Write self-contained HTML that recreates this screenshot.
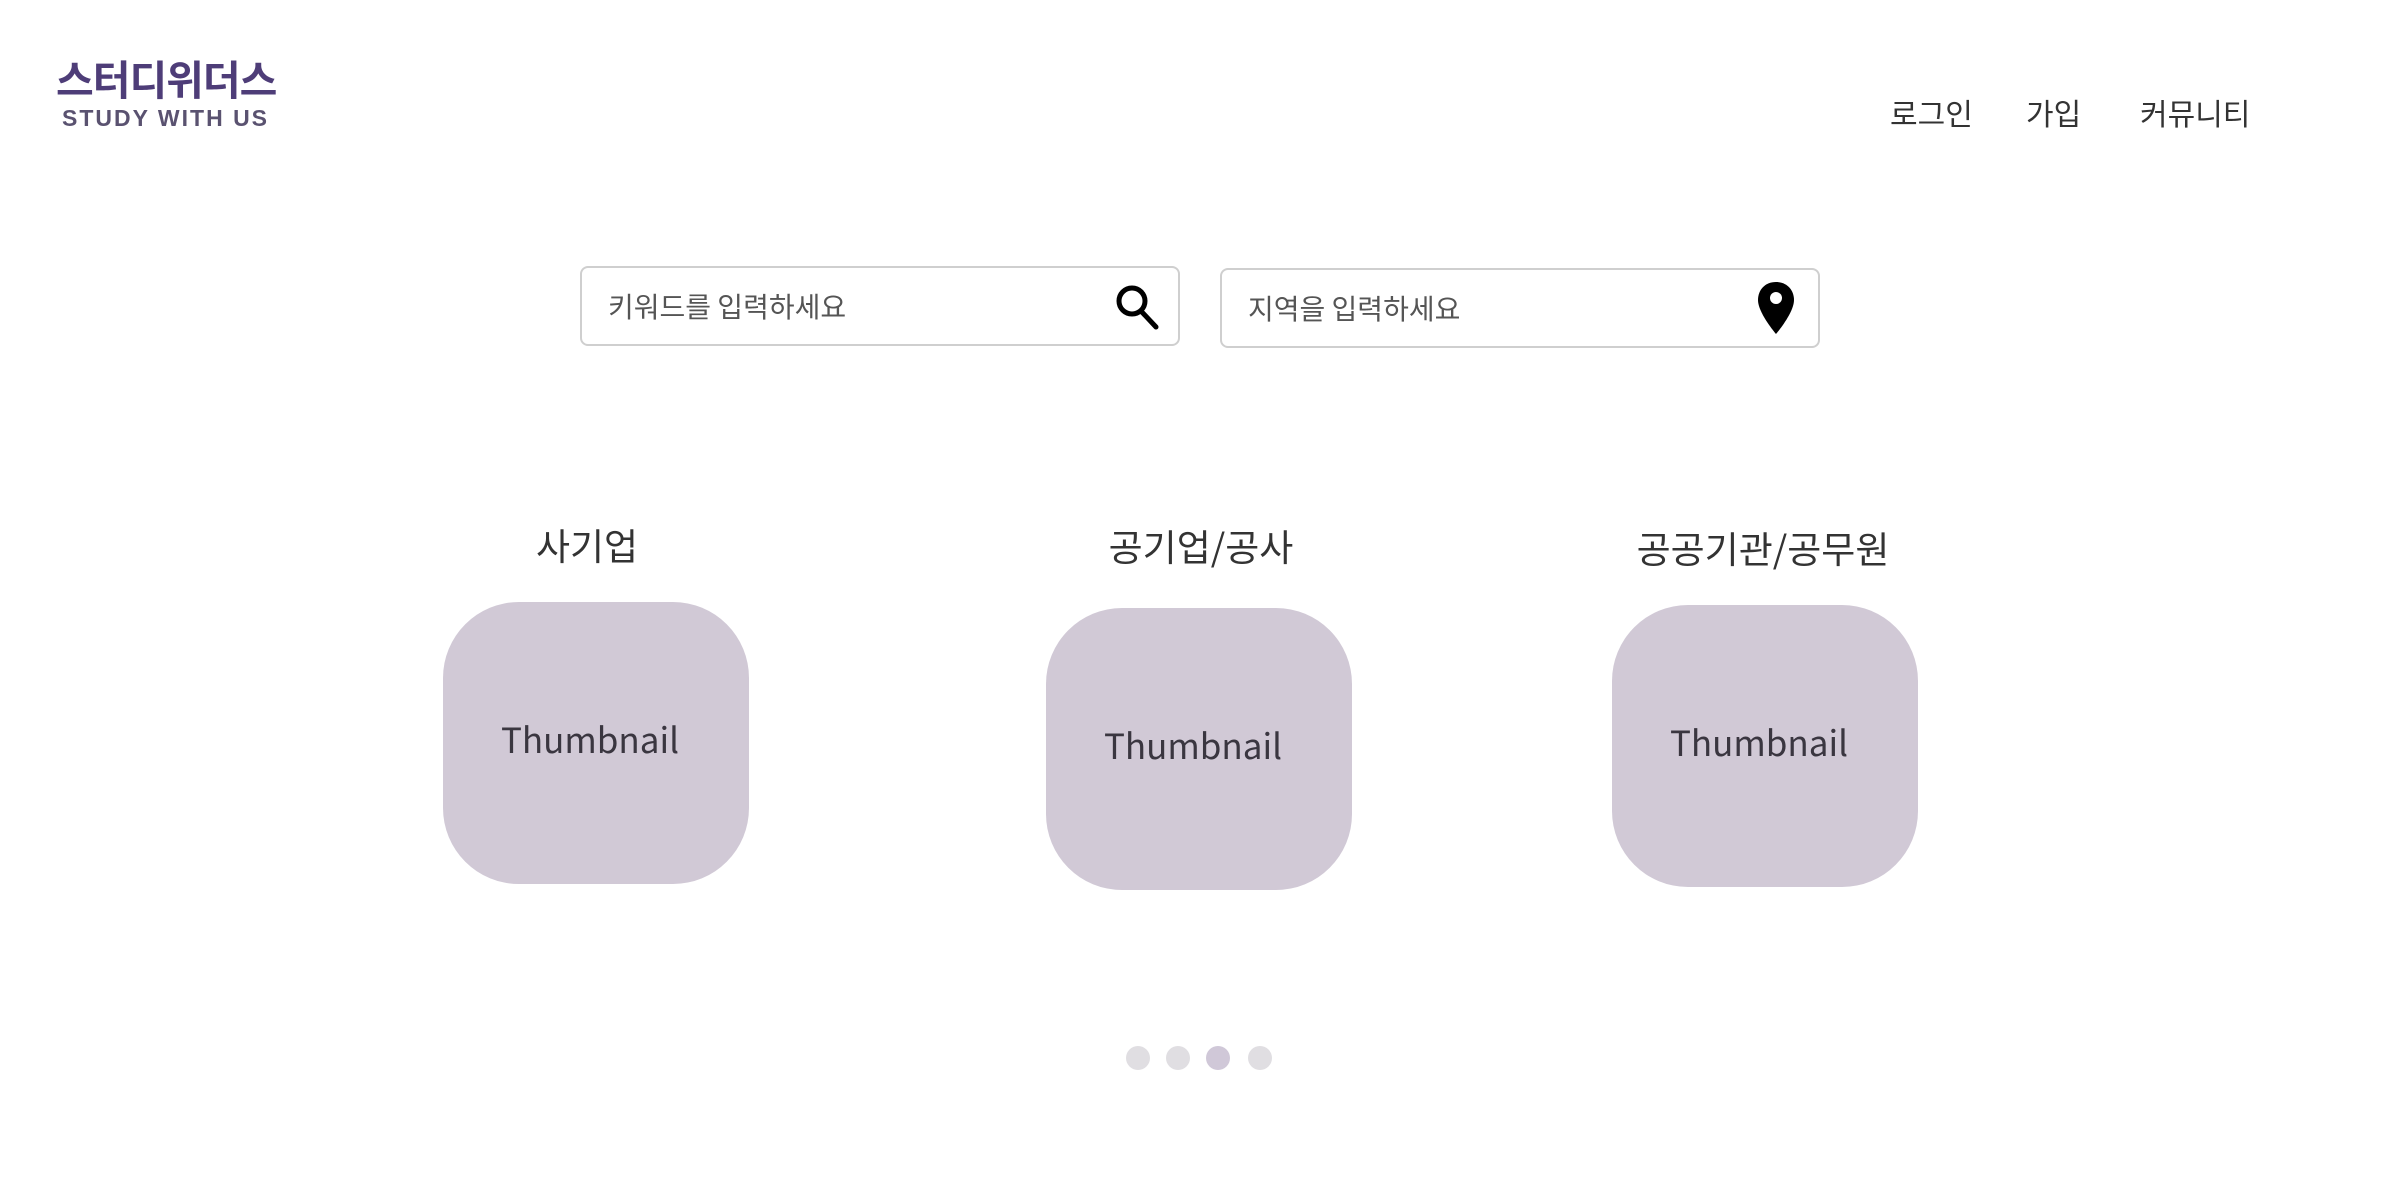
<!DOCTYPE html>
<html><head><meta charset="utf-8"><style>
*{margin:0;padding:0;box-sizing:border-box}
body{width:2400px;height:1200px;background:#fff;position:relative;overflow:hidden;font-family:"Liberation Sans","Noto Sans CJK KR",sans-serif;color:#333}
.abs{position:absolute}
.logo1{left:56px;top:52px;font-size:41px;font-weight:700;color:#4e3d78;letter-spacing:-1px;font-family:"Noto Sans CJK KR",sans-serif;line-height:50px}
.logo2{left:62px;top:104px;font-size:23px;font-weight:700;color:#5a5270;letter-spacing:2px;line-height:28px}
.nav{top:90px;font-size:30px;line-height:44px;color:#333;font-family:"Noto Sans CJK KR",sans-serif}
.box{height:80px;border:2px solid #cfcfcf;border-radius:8px;background:#fff}
.ph{position:absolute;left:26px;top:20px;font-size:28px;line-height:36px;color:#555;font-family:"Noto Sans CJK KR",sans-serif}
.h{font-size:37px;line-height:50px;color:#333;text-align:center;width:400px;font-family:"Noto Sans CJK KR",sans-serif}
.th{width:306px;height:282px;border-radius:76px;background:#d1c9d6;display:flex;align-items:center;justify-content:center;font-size:35px;color:#3a3640;font-family:"Noto Sans CJK KR",sans-serif;padding-bottom:10px;padding-right:12px}
.dot{width:24px;height:24px;border-radius:50%;background:#e0dee2;top:1046px}
</style></head><body>
<div class="abs logo1">스터디위더스</div>
<div class="abs logo2">STUDY WITH US</div>
<div class="abs nav" style="left:1890px">로그인</div>
<div class="abs nav" style="left:2026px">가입</div>
<div class="abs nav" style="left:2140px">커뮤니티</div>

<div class="abs box" style="left:580px;top:266px;width:600px">
<div class="ph">키워드를 입력하세요</div>
<svg class="abs" style="left:532px;top:15px" width="48" height="50" viewBox="0 0 48 50"><circle cx="18" cy="18" r="13" fill="none" stroke="#000" stroke-width="5"/><line x1="27" y1="28" x2="42" y2="44" stroke="#000" stroke-width="5" stroke-linecap="round"/></svg>
</div>
<div class="abs box" style="left:1220px;top:268px;width:600px">
<div class="ph">지역을 입력하세요</div>
<svg class="abs" style="left:534px;top:10px" width="40" height="56" viewBox="0 0 40 56"><path d="M20 2C9 2 2 10 2 20c0 13 18 34 18 34s18-21 18-34C38 10 31 2 20 2z" fill="#000"/><circle cx="20" cy="18" r="6" fill="#fff"/></svg>
</div>

<div class="abs h" style="left:387px;top:519px">사기업</div>
<div class="abs h" style="left:1001px;top:520px">공기업/공사</div>
<div class="abs h" style="left:1563px;top:522px">공공기관/공무원</div>

<div class="abs th" style="left:443px;top:602px">Thumbnail</div>
<div class="abs th" style="left:1046px;top:608px">Thumbnail</div>
<div class="abs th" style="left:1612px;top:605px">Thumbnail</div>

<div class="abs dot" style="left:1126px"></div>
<div class="abs dot" style="left:1166px"></div>
<div class="abs dot" style="left:1206px;background:#d0c8d8"></div>
<div class="abs dot" style="left:1248px"></div>
</body></html>
